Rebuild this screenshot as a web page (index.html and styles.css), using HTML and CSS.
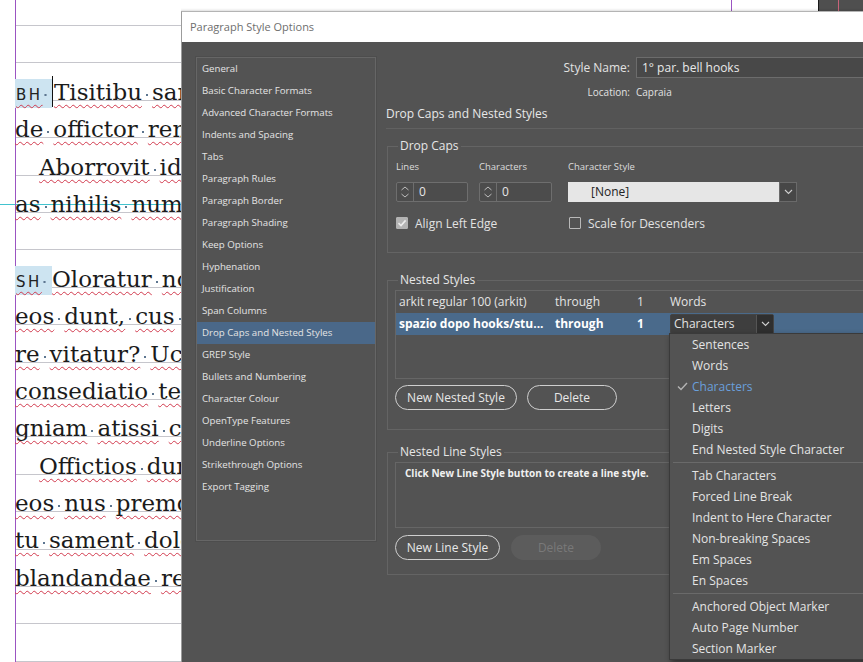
FILE: index.html
```html
<!DOCTYPE html>
<html>
<head>
<meta charset="utf-8">
<title>Paragraph Style Options</title>
<link rel="stylesheet" href="styles.css">
</head>
<body>
<div class="screen">
  <div class="doc">
    <div class="text">
      <div class="ln"><span class="tag">BH<span class="s"></span></span><span class="caret"></span>Tisitibu<span class="s"></span>sam<span class="s"></span>quam</div>
      <div class="ln">de<span class="s"></span>offictor<span class="s"></span>rem<span class="s"></span>que</div>
      <div class="ln ind">Aborrovit<span class="s"></span>idus<span class="s"></span>et</div>
      <div class="ln">as<span class="s"></span>nihilis<span class="s"></span>num<span class="s"></span>que</div>
      <div class="ln"></div>
      <div class="ln"><span class="tag">SH<span class="s"></span></span>Oloratur<span class="s"></span>nos<span class="s"></span>et</div>
      <div class="ln">eos<span class="s"></span>dunt,<span class="s"></span>cus<span class="s"></span>que</div>
      <div class="ln">re<span class="s"></span>vitatur?<span class="s"></span>Ucius<span class="s"></span>et</div>
      <div class="ln">consediatio<span class="s"></span>tem<span class="s"></span>que</div>
      <div class="ln">gniam<span class="s"></span>atissi<span class="s"></span>cum<span class="s"></span>et</div>
      <div class="ln ind">Offictios<span class="s"></span>dum<span class="s"></span>et</div>
      <div class="ln">eos<span class="s"></span>nus<span class="s"></span>premque</div>
      <div class="ln">tu<span class="s"></span>sament<span class="s"></span>dolor</div>
      <div class="ln">blandandae<span class="s"></span>rem</div>
    </div>
  </div>

  <div class="right">
    <div class="strip">
      <div class="strip-gap"></div>
      <div class="guide"></div>
      <div class="strip-gap2"></div>
      <div class="board"><div class="board-pad"></div><div class="board-line"></div></div>
    </div>

    <div class="dialog">
      <div class="titlebar">Paragraph Style Options</div>
      <div class="dbody">
        <ul class="cats">
          <li>General</li>
          <li>Basic Character Formats</li>
          <li>Advanced Character Formats</li>
          <li>Indents and Spacing</li>
          <li>Tabs</li>
          <li>Paragraph Rules</li>
          <li>Paragraph Border</li>
          <li>Paragraph Shading</li>
          <li>Keep Options</li>
          <li>Hyphenation</li>
          <li>Justification</li>
          <li>Span Columns</li>
          <li class="active">Drop Caps and Nested Styles</li>
          <li>GREP Style</li>
          <li>Bullets and Numbering</li>
          <li>Character Colour</li>
          <li>OpenType Features</li>
          <li>Underline Options</li>
          <li>Strikethrough Options</li>
          <li>Export Tagging</li>
        </ul>

        <div class="main">
          <div class="namerow">
            <div class="namelabel">Style Name:</div>
            <div class="nameinput">1° par. bell hooks</div>
          </div>
          <div class="locrow">
            <div class="loclabel">Location:</div>
            <div>Capraia</div>
          </div>
          <div class="heading">Drop Caps and Nested Styles</div>

          <fieldset class="grp dc">
            <legend>Drop Caps</legend>
            <div class="dc-body">
              <div class="dc-grid">
                <div class="field">
                  <div class="flabel">Lines</div>
                  <div class="spin w72">
                    <div class="arrows"><svg width="16" height="18" viewBox="0 0 16 18"><path d="M4.5 7 L8 4 L11.5 7 M4.5 11 L8 14 L11.5 11" fill="none" stroke="#bdbdbd" stroke-width="1"/></svg></div>
                    <div class="spinval">0</div>
                  </div>
                </div>
                <div class="field">
                  <div class="flabel">Characters</div>
                  <div class="spin w73">
                    <div class="arrows"><svg width="16" height="18" viewBox="0 0 16 18"><path d="M4.5 7 L8 4 L11.5 7 M4.5 11 L8 14 L11.5 11" fill="none" stroke="#bdbdbd" stroke-width="1"/></svg></div>
                    <div class="spinval">0</div>
                  </div>
                </div>
                <div class="field">
                  <div class="flabel">Character Style</div>
                  <div class="lightsel">
                    <div class="lightval">[None]</div>
                    <div class="lightbtn"><svg width="9" height="6" viewBox="0 0 9 6"><path d="M1 1 L4.5 4.5 L8 1" fill="none" stroke="#cfcfcf" stroke-width="1.1"/></svg></div>
                  </div>
                </div>
              </div>
              <div class="checks">
                <div class="chk"><span class="box on"><svg width="12" height="12" viewBox="0 0 12 12"><path d="M2.5 6.2 L5 8.6 L9.6 3.4" fill="none" stroke="#ececec" stroke-width="1.6"/></svg></span>Align Left Edge</div>
                <div class="chk"><span class="box"></span>Scale for Descenders</div>
              </div>
            </div>
          </fieldset>

          <fieldset class="grp ns">
            <legend>Nested Styles</legend>
            <div class="ns-body">
              <div class="table">
                <div class="row">
                  <div>arkit regular 100 (arkit)</div>
                  <div>through</div>
                  <div>1</div>
                  <div>Words</div>
                </div>
                <div class="row sel">
                  <div>spazio dopo hooks/stu...</div>
                  <div>through</div>
                  <div>1</div>
                  <div class="unitcell">
                    <div class="darksel">
                      <div class="darkval">Characters</div>
                      <div class="darkbtn"><svg width="9" height="6" viewBox="0 0 9 6"><path d="M1 1 L4.5 4.5 L8 1" fill="none" stroke="#d0d0d0" stroke-width="1.1"/></svg></div>
                    </div>
                    <div class="menu">
                      <div class="mi"><span class="ck"></span>Sentences</div>
                      <div class="mi"><span class="ck"></span>Words</div>
                      <div class="mi checked"><span class="ck"><svg width="11" height="9" viewBox="0 0 11 9"><path d="M1 4.5 L4 7.5 L10 1" fill="none" stroke="#b4b4b4" stroke-width="1.4"/></svg></span>Characters</div>
                      <div class="mi"><span class="ck"></span>Letters</div>
                      <div class="mi"><span class="ck"></span>Digits</div>
                      <div class="mi"><span class="ck"></span>End Nested Style Character</div>
                      <div class="sep"></div>
                      <div class="mi"><span class="ck"></span>Tab Characters</div>
                      <div class="mi"><span class="ck"></span>Forced Line Break</div>
                      <div class="mi"><span class="ck"></span>Indent to Here Character</div>
                      <div class="mi"><span class="ck"></span>Non-breaking Spaces</div>
                      <div class="mi"><span class="ck"></span>Em Spaces</div>
                      <div class="mi"><span class="ck"></span>En Spaces</div>
                      <div class="sep"></div>
                      <div class="mi"><span class="ck"></span>Anchored Object Marker</div>
                      <div class="mi"><span class="ck"></span>Auto Page Number</div>
                      <div class="mi"><span class="ck"></span>Section Marker</div>
                    </div>
                  </div>
                </div>
              </div>
              <div class="btns">
                <div class="btn w122">New Nested Style</div>
                <div class="btn w90">Delete</div>
              </div>
            </div>
          </fieldset>

          <fieldset class="grp nl">
            <legend>Nested Line Styles</legend>
            <div class="nl-body">
              <div class="nlbox">Click New Line Style button to create a line style.</div>
              <div class="btns gap11">
                <div class="btn w105">New Line Style</div>
                <div class="btn w90 disabled">Delete</div>
              </div>
            </div>
          </fieldset>
        </div>
      </div>
    </div>
  </div>
</div>
</body>
</html>
```

FILE: styles.css
```css
* { box-sizing: border-box; margin: 0; padding: 0; }

html, body {
  width: 863px;
  height: 662px;
  overflow: hidden;
  background: #ffffff;
}

body {
  font-family: "Open Sans", "Noto Sans", sans-serif;
}

.screen {
  display: flex;
  height: 662px;
}

/* ---------- document page ---------- */
.doc {
  width: 181px;
  flex: none;
  height: 662px;
  overflow: hidden;
  background:
    linear-gradient(to right, transparent 15px, #9b54c2 15px, #9b54c2 16px, transparent 16px),
    linear-gradient(to bottom, transparent 204px, #42c3cf 204px, #42c3cf 205px, transparent 205px),
    repeating-linear-gradient(to bottom, transparent 0, transparent 25px, #c6c6cc 25px, #c6c6cc 26px, transparent 26px, transparent 37.4px) 16px 0 / calc(100% - 16px) 100% no-repeat,
    #ffffff;
}

.text {
  padding: 73.8px 0 0 15px;
  font-family: "DejaVu Serif", serif;
  font-size: 23px;
  color: #1b1b1b;
}

.ln {
  height: 37.4px;
  line-height: 37.4px;
  white-space: nowrap;
  text-decoration: underline wavy #d23a4e;
  text-decoration-thickness: 1.2px;
  text-underline-offset: 4px;
  text-decoration-skip-ink: none;
}

.ln.ind { padding-left: 24px; }

.s {
  display: inline-block;
  width: 10px;
  height: 10px;
  background: radial-gradient(circle, #5d7690 0, #5d7690 0.9px, transparent 1.4px) no-repeat center / 10px 10px;
}

.tag {
  display: inline-block;
  width: 37px;
  height: 29px;
  padding: 4px 0 0 1px;
  line-height: 25px;
  background: #cde4f1;
  font-family: "DejaVu Sans", sans-serif;
  font-size: 15px;
  letter-spacing: 2.5px;
  color: #222222;
  text-decoration: underline wavy #d23a4e;
  text-decoration-thickness: 1.2px;
  text-underline-offset: 4px;
}

.tag .s { width: 5px; background-size: 5px 10px; }

.caret {
  display: inline-block;
  width: 1px;
  height: 31px;
  margin-right: 1px;
  background: #111111;
  vertical-align: -7px;
}

/* ---------- right side ---------- */
.right {
  flex: 1;
  min-width: 0;
  display: flex;
  flex-direction: column;
  overflow: hidden;
}

.strip {
  height: 11px;
  flex: none;
  display: flex;
  background: #ffffff;
}

.strip-gap { width: 550px; flex: none; }
.guide { width: 1px; flex: none; background: #9b54c2; }
.strip-gap2 { width: 86px; flex: none; }
.board {
  flex: 1;
  display: flex;
  background: #4f4f4f;
  border-left: 1px solid #1a1a1a;
}
.board-pad { width: 19px; }
.board-line { width: 1px; background: #c9637a; }

.dialog {
  flex: 1;
  width: 760px;
  display: flex;
  flex-direction: column;
  border-left: 1px solid #9c9c9c;
  border-top: 1px solid #b4b4b4;
  box-shadow: -1px 0 3px rgba(0, 0, 0, 0.25);
}

.titlebar {
  height: 30px;
  flex: none;
  background: #ffffff;
  padding-left: 8px;
  line-height: 30px;
  font-size: 11px;
  color: #6e6e6e;
}

.dbody {
  flex: 1;
  background: #535353;
  display: grid;
  grid-template-columns: 180px 540px;
  column-gap: 10px;
  align-items: start;
  padding: 15px 0 0 14px;
}

/* category list */
.cats {
  list-style: none;
  height: 484px;
  border: 1px solid #666666;
  box-shadow: 0 0 0 1px #4d4d4d;
}

.cats li {
  height: 22px;
  line-height: 22px;
  padding-left: 5px;
  font-size: 9.7px;
  color: #e4e4e4;
}

.cats li.active { background: #4a6889; }

/* main panel */
.main {
  color: #e2e2e2;
}

.namerow,
.locrow {
  display: grid;
  grid-template-columns: 244px 1fr;
  column-gap: 6px;
  align-items: center;
}

.namerow { height: 21px; font-size: 12px; }
.namelabel, .loclabel { text-align: right; }

.nameinput {
  height: 21px;
  line-height: 19px;
  padding-left: 5px;
  border: 1px solid #6c6c6c;
  background: #484848;
  color: #e8e8e8;
}

.locrow {
  margin-top: 6px;
  height: 16px;
  line-height: 16px;
  font-size: 10px;
}

.heading {
  margin-top: 4px;
  font-size: 12px;
  line-height: 20px;
  padding-bottom: 4px;
  border-bottom: 1px solid #616161;
  color: #e8e8e8;
}

/* group boxes */
.grp {
  border: 1px solid #646464;
  margin: 9px 0 0 1px;
  padding: 0;
  min-width: 0;
}

.grp legend {
  margin-left: 10px;
  padding: 0 2px;
  font-size: 12px;
  line-height: 16px;
  color: #e6e6e6;
}

.grp.ns { margin-top: 19px; }
.grp.nl { margin-top: 14px; }

.dc-body { padding: 6px 8px 21px 8px; }

.dc-grid {
  display: grid;
  grid-template-columns: 83px 89px 229px;
}

.field {
  display: flex;
  flex-direction: column;
  gap: 8px;
}

.flabel {
  font-size: 9.5px;
  line-height: 14px;
  color: #dcdcdc;
}

.spin {
  height: 20px;
  display: flex;
  border: 1px solid #6e6e6e;
  border-radius: 2px;
  background: #4c4c4c;
}
.w72 { width: 72px; }
.w73 { width: 73px; }

.arrows {
  width: 17px;
  border-right: 1px solid #6e6e6e;
  display: flex;
  align-items: center;
  justify-content: center;
}

.spinval {
  padding-left: 5px;
  font-size: 12px;
  line-height: 18px;
  color: #e6e6e6;
}

.lightsel {
  width: 229px;
  height: 20px;
  display: flex;
}

.lightval {
  flex: 1;
  background: #e6e6e6;
  padding-left: 23px;
  font-size: 12px;
  line-height: 20px;
  color: #222222;
}

.lightbtn {
  width: 18px;
  background: #474747;
  border: 1px solid #6a6a6a;
  display: flex;
  align-items: center;
  justify-content: center;
}

.checks {
  margin-top: 13px;
  display: grid;
  grid-template-columns: 173px auto;
}

.chk {
  display: flex;
  align-items: center;
  gap: 7px;
  height: 16px;
  font-size: 12px;
  color: #e2e2e2;
}

.box {
  width: 12px;
  height: 12px;
  border: 1px solid #b9b9b9;
  border-radius: 1px;
  display: flex;
}

.box.on {
  background: #b3b3b3;
  border-color: #b3b3b3;
}

.box svg { margin: -1px; }

/* nested styles */
.ns-body { padding: 2px 7px 19px 7px; }

.table {
  height: 89px;
  border: 1px solid #666666;
}

.row {
  display: grid;
  grid-template-columns: 156px 82px 33px 1fr;
  height: 22px;
  line-height: 22px;
  padding-left: 3px;
  font-size: 12px;
  color: #e4e4e4;
  white-space: nowrap;
}

.row.sel {
  background: #4a6a8b;
  font-weight: bold;
  color: #ffffff;
}

.unitcell {
  position: relative;
  align-self: center;
}

.darksel {
  width: 104px;
  height: 20px;
  display: flex;
  background: #3e3e3e;
  border: 1px solid #444444;
  border-radius: 2px;
  font-weight: normal;
}

.darkval {
  flex: 1;
  padding-left: 3px;
  line-height: 18px;
  color: #e2e2e2;
}

.darkbtn {
  width: 17px;
  background: #2f2f2f;
  border-left: 1px solid #555555;
  display: flex;
  align-items: center;
  justify-content: center;
}

.menu {
  position: absolute;
  left: -1px;
  top: calc(100% - 1px);
  width: 250px;
  background: #535353;
  border: 1px solid #3a3a3a;
  box-shadow: 2px 3px 6px rgba(0, 0, 0, 0.45);
  z-index: 10;
  font-weight: normal;
}

.mi {
  height: 21px;
  line-height: 21px;
  display: flex;
  align-items: center;
  padding-left: 7px;
  font-size: 12px;
  color: #e4e4e4;
}

.mi.checked { color: #6a9fdb; }

.ck {
  width: 15px;
  flex: none;
  display: flex;
  align-items: center;
}

.sep {
  height: 5px;
  display: flex;
  align-items: center;
}

.sep::before {
  content: "";
  flex: 1;
  height: 1px;
  margin-left: 3px;
  background: #6a6a6a;
}

.btns {
  margin-top: 6px;
  display: flex;
  gap: 10px;
}

.btns.gap11 { gap: 11px; margin-top: 7px; }

.btn {
  height: 25px;
  border: 1px solid #cfcfcf;
  border-radius: 13px;
  display: flex;
  align-items: center;
  justify-content: center;
  font-size: 12px;
  color: #e8e8e8;
}

.w122 { width: 122px; }
.w105 { width: 105px; }
.w90 { width: 90px; }

.btn.disabled {
  border-color: transparent;
  background: #5c5c5c;
  color: #797979;
}

/* nested line styles */
.nl-body { padding: 2px 7px 14px 7px; }

.nlbox {
  height: 66px;
  border: 1px solid #666666;
  padding: 3px 9px;
  font-size: 10px;
  font-weight: bold;
  line-height: 14px;
  color: #f0f0f0;
}
```
